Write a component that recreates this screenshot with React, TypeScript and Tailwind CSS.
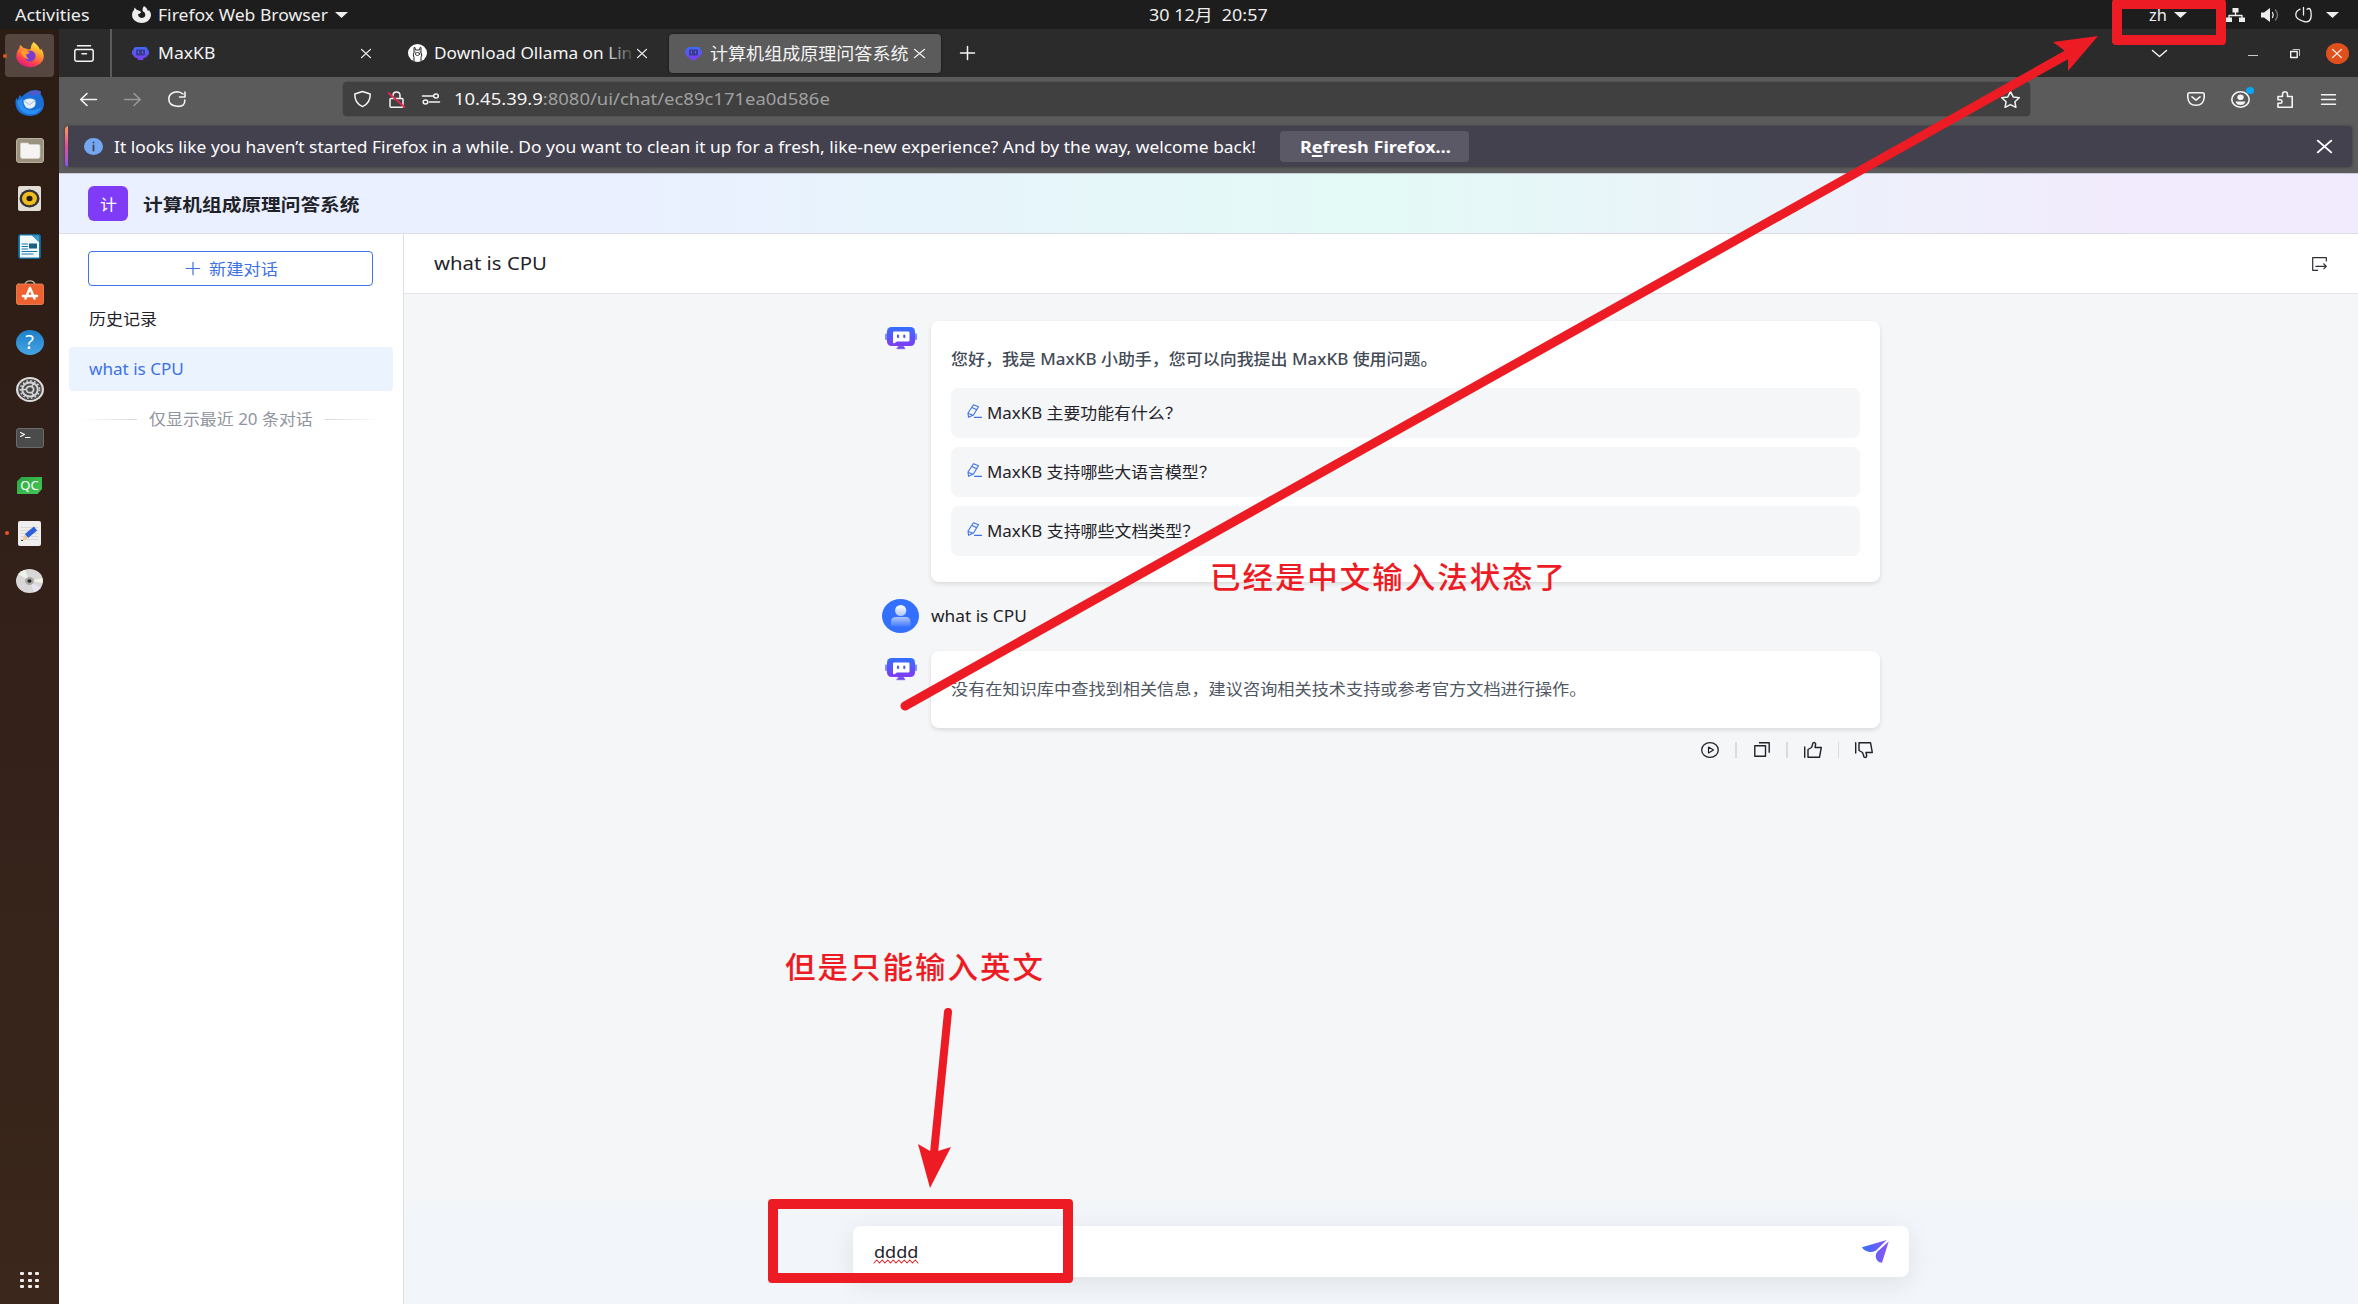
import { useLayoutEffect, useRef, useState, type ReactNode } from "react";

/* Single-line text stretched horizontally to fill the width given by its class. */
function Fit({ className, inner = "", children }: { className: string; inner?: string; children: ReactNode }) {
  const box = useRef<HTMLDivElement>(null);
  const text = useRef<HTMLSpanElement>(null);
  const [scale, setScale] = useState(1);
  useLayoutEffect(() => {
    if (box.current && text.current) setScale(box.current.clientWidth / text.current.offsetWidth);
  }, []);
  return (
    <div ref={box} className={"shrink-0 whitespace-nowrap " + className}>
      <span ref={text} className={"inline-block origin-left " + inner} style={{ transform: `scaleX(${scale})` }}>
        {children}
      </span>
    </div>
  );
}

function Icon({ className, box, children }: { className: string; box: string; children: ReactNode }) {
  return (
    <svg
      viewBox={box}
      preserveAspectRatio="none"
      className={"block shrink-0 overflow-visible " + className}
      fill="none"
      stroke="currentColor"
      strokeWidth="1.5"
      strokeLinecap="round"
      strokeLinejoin="round"
    >
      {children}
    </svg>
  );
}

const Caret = ({ className }: { className: string }) => (
  <Icon className={"h-[6px] w-[13px] " + className} box="0 0 13 6">
    <path d="M0 0H13L6.5 6Z" fill="currentColor" stroke="none" />
  </Icon>
);

const Close = ({ className }: { className: string }) => (
  <Icon className={className} box="0 0 10 10">
    <path d="M.5.5l9 9M9.500.5l-9 9" strokeWidth="1.3" />
  </Icon>
);

const BotFavicon = ({ className }: { className: string }) => (
  <Icon className={"h-[13px] w-[17px] " + className} box="0 0 17 13">
    <defs>
      <linearGradient id="fav" x1="0" y1="0" x2="0" y2="1">
        <stop offset="0" stopColor="#3b6cf6" />
        <stop offset="1" stopColor="#7f3bf5" />
      </linearGradient>
    </defs>
    <path d="M4 0H13Q15.500 0 15.500 2.500L17 4V7L15.500 8.500Q15 10.500 12.500 10.800L11 11.500 11.500 13H5.500L6 11.500 4 10.800Q1.800 10.500 1.500 8.500L0 7V4L1.500 2.500Q1.500 0 4 0Z" fill="url(#fav)" stroke="none" />
    <rect x="4" y="2.500" width="9" height="6" rx="1" fill="#3c3a8e" stroke="none" />
    <path d="M6.500 4.500v1.500M10.500 4.500v1.500" stroke="#5a66ee" strokeWidth="1.200" />
  </Icon>
);

const BotAvatar = () => (
  <Icon className="h-[22px] w-[32px]" box="0 0 32 22">
    <defs>
      <linearGradient id="bot" x1="0" y1="0" x2="0" y2="1">
        <stop offset="0" stopColor="#3370ff" />
        <stop offset="1" stopColor="#7f3bf5" />
      </linearGradient>
    </defs>
    <rect x="0" y="6.500" width="3" height="6.500" rx="1" fill="#7b8df8" stroke="none" />
    <rect x="29" y="6.500" width="3" height="6.500" rx="1" fill="#7b8df8" stroke="none" />
    <rect x="2" y="0" width="28" height="19" rx="4.500" fill="url(#bot)" stroke="none" />
    <path d="M9 4.500H23.500Q24.500 4.500 24.500 5.500V13.500Q24.500 14.500 23.500 14.500H12L9 16.500 8 15.500V5.500Q8 4.500 9 4.500Z" fill="#fff" stroke="none" />
    <path d="M13 8.500v1.600M19.300 8.500v1.600" stroke="#5a5af0" strokeWidth="2.200" />
    <path d="M13.500 19.300h5l1.500 2.500h-8z" fill="#6a4be8" stroke="#6a4be8" strokeWidth=".5" />
  </Icon>
);

const UserAvatar = () => (
  <Icon className="h-[34px] w-[37px]" box="0 0 37 34">
    <defs>
      <linearGradient id="usr" x1="0" y1="0" x2="0" y2="1">
        <stop offset="0" stopColor="#fff" />
        <stop offset="1" stopColor="#fff" stopOpacity=".6" />
      </linearGradient>
      <linearGradient id="usr2" x1="0" y1="0" x2="0" y2="1">
        <stop offset="0" stopColor="#fff" stopOpacity=".6" />
        <stop offset="1" stopColor="#fff" stopOpacity=".05" />
      </linearGradient>
    </defs>
    <ellipse cx="18.500" cy="17" rx="18.500" ry="17" fill="#3370ff" stroke="none" />
    <ellipse cx="18.700" cy="11.500" rx="5.600" ry="5.500" fill="url(#usr)" stroke="none" />
    <path d="M9 27V23Q9 18 14 18H23.500Q28.500 18 28.500 23V27Q23 28 18.700 28T9 27Z" fill="url(#usr2)" stroke="none" />
  </Icon>
);

const EditPen = () => (
  <Icon className="h-[14px] w-[15px] text-[#3d72e8]" box="0 0 15 14">
    <path d="M6.500.7l5 2-5 8.300L1.500 13.300 1 9zM5 3.500l4.800 2.200M1.300 9.500l4.700 1.700M7.500 13.400h7" strokeWidth="1.100" />
  </Icon>
);

function Dock() {
  const cell = "flex h-[47.8px] w-[59px] shrink-0 items-center justify-center";
  return (
    <div className="flex w-[59px] shrink-0 flex-col bg-linear-to-b from-[#2b1c14] via-[#33211a] to-[#3b271b] pt-[2.500px]">
      <div className={cell + " relative"}>
        <span className="absolute left-[3px] top-[22px] h-[4px] w-[4px] rounded-full bg-[#e95420]" />
        <div className="flex h-[43px] w-[49px] items-center justify-center rounded-[4px] bg-[#554740]">
          <Icon className="h-[26px] w-[28px]" box="0 0 28 26">
            <defs>
              <linearGradient id="ffx" x1=".8" y1="0" x2=".3" y2="1">
                <stop offset="0" stopColor="#fff04a" />
                <stop offset=".35" stopColor="#ffa630" />
                <stop offset=".7" stopColor="#ff4a45" />
                <stop offset="1" stopColor="#e31587" />
              </linearGradient>
            </defs>
            <path d="M17.500 0Q23 4 24 8 25 7.500 25 6.500 28 10.500 27.700 15.500A13.800 11.500 0 0 1 .3 14.500Q.5 9 3.200 6.500L4 3Q6 4.200 7.500 6 10 6 12 7.500 13.500 7.500 14.500 7 14.500 3 17.500 0Z" fill="url(#ffx)" stroke="none" />
            <circle cx="14" cy="14" r="5.600" fill="#7b3ad0" stroke="none" />
            <path d="M4.500 9.500Q8 7 11.500 9.500L14 10Q12.500 12 10 12.500 10 15 13 17.500 7 17 4.500 9.500Z" fill="#ff9a2e" stroke="none" />
          </Icon>
        </div>
      </div>
      <div className={cell}>
        <Icon className="h-[26px] w-[29px]" box="0 0 29 26">
          <path d="M13 2Q19-1.500 26 1.500L25.500 4Q29 8 29 14 28 25 15.500 26 2 25.500 .5 14 0 11 1.500 8L3 10Q3 7 5 5L6.500 7Q9 4 13 2Z" fill="#1a6fd6" stroke="none" />
          <path d="M2 11Q3 21 12 24 22 26 27 17 21 21 15 20 7 19 7 9Z" fill="#2a8ff0" stroke="none" />
          <path d="M13 3Q19-1 26 2L25 4.500Q21 3 17 6Z" fill="#5a56c8" stroke="none" />
          <path d="M8.500 10.500Q14 7 20 10 21.500 14 19 17 15 20 11 17.500 8 14 8.500 10.500Z" fill="#e6f0fb" stroke="none" />
          <path d="M9 10.800l5.500 4 5.500-4.300" stroke="#9db9dd" strokeWidth="1" />
        </Icon>
      </div>
      <div className={cell}>
        <Icon className="h-[25px] w-[28px]" box="0 0 28 25">
          <rect x=".5" y=".5" width="27" height="24" rx="2.500" fill="#9a917f" stroke="#b9b1a0" strokeWidth="1" />
          <path d="M5.500 5H12l1.500 1.500H22.500Q24 6.500 24 8V18.500Q24 20.500 22 20.500H6.500Q4.500 20.500 4.500 18.500V6Q4.500 5 5.500 5Z" fill="#f6f4f2" stroke="#d8d4cd" strokeWidth=".7" />
        </Icon>
      </div>
      <div className={cell}>
        <Icon className="h-[25px] w-[23px]" box="0 0 23 25">
          <rect width="23" height="25" rx="2" fill="#e2ddd5" stroke="none" />
          <ellipse cx="11.500" cy="12.500" rx="10" ry="9" fill="#333" stroke="none" />
          <ellipse cx="11.500" cy="12.500" rx="7.500" ry="6.800" fill="#efbb1e" stroke="none" />
          <ellipse cx="11.500" cy="12.500" rx="3" ry="2.700" fill="#221d10" stroke="none" />
        </Icon>
      </div>
      <div className={cell}>
        <Icon className="h-[25px] w-[23px]" box="0 0 23 25">
          <rect x=".5" y=".5" width="22" height="24" rx="2" fill="#1879ad" stroke="#0f6594" strokeWidth="1" />
          <path d="M2 1.500H14L21 8V23.500H2Z" fill="#f3f8fb" stroke="none" />
          <path d="M14 1.500L21 8V1.500Z" fill="#3f9cc9" stroke="none" />
          <rect x="11" y="9.500" width="8" height="5" fill="#1b5f86" stroke="none" />
          <path d="M4 10h5.500M4 12.500h5.500M4 15h5.500M4 17.500h15M4 20h11" stroke="#1879ad" strokeWidth="1.200" />
        </Icon>
      </div>
      <div className={cell}>
        <Icon className="mb-[3px] h-[25px] w-[28px]" box="0 0 28 25">
          <path d="M9 4.500Q10 .8 14 .8T19 4.500" stroke="#c9b9a5" strokeWidth="1.300" />
          <rect x=".5" y="4" width="27" height="20.500" rx="2" fill="#ee6230" stroke="#f28a5e" strokeWidth=".8" />
          <path d="M9.500 18.500L14 8l4.500 10.500M7 16h14" stroke="#fff" strokeWidth="2.500" />
        </Icon>
      </div>
      <div className={cell}>
        <div className="flex h-[25px] w-[28px] items-center justify-center rounded-[50%] bg-linear-to-b from-[#1c7fcb] to-[#45a5e2] text-[20px] leading-none text-white">?</div>
      </div>
      <div className={cell}>
        <Icon className="h-[25px] w-[28px]" box="0 0 28 25">
          <ellipse cx="14" cy="12.500" rx="14" ry="12.500" fill="#dcdbd9" stroke="none" />
          <ellipse cx="14" cy="12.500" rx="11.800" ry="10.500" fill="#4a4a4a" stroke="none" />
          <ellipse cx="14" cy="12.500" rx="7.800" ry="7" stroke="#d5d5d5" strokeWidth="2" />
          <ellipse cx="14" cy="12.500" rx="9.600" ry="8.600" stroke="#d5d5d5" strokeWidth="1.600" strokeDasharray="1.600 2.300" strokeLinecap="butt" />
          <ellipse cx="14" cy="12.500" rx="3.600" ry="3.200" stroke="#d5d5d5" strokeWidth="1.800" />
          <path d="M10 12.500H6M16 9l2-3M16 16l2 3" stroke="#d5d5d5" strokeWidth="1.500" />
        </Icon>
      </div>
      <div className={cell}>
        <Icon className="h-[20px] w-[28px]" box="0 0 28 20">
          <rect x=".5" y=".5" width="27" height="19" rx="2" fill="#4b4b4b" stroke="#6b6b6b" strokeWidth="1" />
          <path d="M4.500 4.500l4 2-4 2M9.500 9.500h4.500" stroke="#fff" strokeWidth="1.100" />
        </Icon>
      </div>
      <div className={cell}>
        <div className="flex h-[17px] w-[25px] items-center justify-center bg-linear-to-br from-[#2ba63f] to-[#45c759] text-[13px] leading-none text-white [clip-path:polygon(18%_0,100%_0,100%_70%,82%_100%,0_100%,0_25%)]">
          QC
        </div>
      </div>
      <div className={cell + " relative"}>
        <span className="absolute left-[5px] top-[22px] h-[4px] w-[4px] rounded-full bg-[#e95420]" />
        <Icon className="h-[25px] w-[23px]" box="0 0 23 25">
          <rect width="23" height="25" rx="2" fill="#efeeed" stroke="none" />
          <path d="M3 6.500h17M3 9.500h17M3 12.500h17M3 15.500h17M3 18.500h17" stroke="#cfcfcf" strokeWidth=".7" />
          <path d="M8.500 15L17.500 7.500" stroke="#2e5fd8" strokeWidth="5" strokeLinecap="butt" />
          <path d="M6.500 13.800l4 3.200-6.500 3z" fill="#f0c8a0" stroke="none" />
          <path d="M3.500 19.500h1" stroke="#333" strokeWidth="1" />
        </Icon>
      </div>
      <div className={cell}>
        <Icon className="h-[24px] w-[27px]" box="0 0 27 24">
          <ellipse cx="13.500" cy="12" rx="13.500" ry="12" fill="#d8d6d6" stroke="none" />
          <path d="M13.500 12L2 5Q5 1.500 9 .8Z" fill="#eef3ea" stroke="none" />
          <path d="M13.500 12L25 19Q22 22.500 18 23.200Z" fill="#e8e4f3" stroke="none" />
          <path d="M13.500 12L26.500 9V14Z" fill="#f5f1e6" stroke="none" />
          <ellipse cx="13.500" cy="12" rx="4.500" ry="4" fill="#a9a6a6" stroke="none" />
          <ellipse cx="13.500" cy="12" rx="2" ry="1.800" fill="#2d2222" stroke="none" />
        </Icon>
      </div>
      <div className="mt-auto flex h-[48px] items-center justify-center">
        <div className="grid grid-cols-3 gap-x-[3.500px] gap-y-[3.500px]">
          {Array.from({ length: 9 }, (_, i) => (
            <span key={i} className="h-[3px] w-[4px] rounded-[1px] bg-[#f0eeec]" />
          ))}
        </div>
      </div>
    </div>
  );
}

function TopBar() {
  return (
    <div className="flex h-[29px] shrink-0 items-center bg-[#1d1d1d] text-[15.500px] leading-[20px] text-[#eeeeee]">
      <Fit className="ml-[15px] w-[75px]">Activities</Fit>
      <Icon className="ml-[42px] h-[17px] w-[19px]" box="0 0 19 17">
        <path d="M12 0Q15.500 2 16 5L17 4Q19 6.500 19 9.500A9.500 7.800 0 0 1 0 9Q0 5.500 2 4L2.500 1.500 5 4Q7 4 8.500 5.500L9 6.500Q7.500 8 6 8.200 6.500 12 10 12 13.500 11.500 13.300 8.500 13.200 6 10.500 5 10 2 12 0Z" fill="currentColor" stroke="none" />
      </Icon>
      <Fit className="ml-[7px] w-[170px]">Firefox Web Browser</Fit>
      <Caret className="ml-[7px]" />
      <Fit className="ml-[801px] mt-[1px] w-[119px]">30 12月&nbsp; 20:57</Fit>
      <Fit className="ml-[881px] w-[18px]">zh</Fit>
      <Caret className="ml-[7px]" />
      <Icon className="ml-[39px] h-[14px] w-[19px]" box="0 0 19 14">
        <path d="M6.500 0h6v4.500h-6zM0 9.500h6V14H0zM13 9.500h6V14h-6z" fill="currentColor" stroke="none" />
        <path d="M9.500 4v3.500M3 10V7.500h13V10" strokeWidth="1.300" />
      </Icon>
      <Icon className="ml-[16px] h-[14px] w-[18px]" box="0 0 18 14">
        <path d="M0 4.500h3L9 0v14L3 9.500H0z" fill="currentColor" stroke="none" />
        <path d="M11.500 4.500q1.500 2.500 0 5" strokeWidth="1.300" />
        <path d="M14.500 2q4 5 0 10" stroke="#777" strokeWidth="1.300" />
      </Icon>
      <Icon className="ml-[16px] h-[14px] w-[17px]" box="0 0 17 14">
        <path d="M5 1.200Q.8 3 .8 7T8.500 13.300 16.200 7 12 1.200M8.500-.5V7" strokeWidth="1.300" />
      </Icon>
      <Caret className="ml-[14px]" />
    </div>
  );
}

function TabStrip() {
  return (
    <div className="flex h-[48px] shrink-0 items-center bg-[#2b2b2b] text-[16px] leading-[20px] text-[#f4f4f4]">
      <Icon className="ml-[14.500px] h-[17px] w-[20px]" box="0 0 20 17">
        <path d="M3.500.7h13M1.500 4.500h17M.8 6.500Q.8 4.500 2.500 4.500h15Q19.200 4.500 19.200 6.500v7.500Q19.200 16.300 17 16.300H3Q.8 16.300 .8 14zM8 8.800h4.500" strokeWidth="1.500" />
      </Icon>
      <div className="ml-[16px] h-full w-[2px] bg-[#5b5b5b]" />
      <BotFavicon className="ml-[20.500px]" />
      <Fit className="ml-[8.500px] w-[57px]">MaxKB</Fit>
      <Close className="ml-[146.500px] h-[9px] w-[10px]" />
      <Icon className="ml-[36.500px] h-[18px] w-[19px]" box="0 0 19 18">
        <ellipse cx="9.500" cy="9" rx="9.500" ry="9" fill="#fff" stroke="none" />
        <path d="M6 17V13.500Q4.500 11 6 8.500V3.500Q7 2 7.500 6H11.500Q12 2 13 3.500V8.500Q14.500 11 13 13.500V17" stroke="#222" strokeWidth="1" />
        <ellipse cx="9.500" cy="10" rx="2.200" ry="1.500" stroke="#222" strokeWidth=".8" />
        <path d="M7 8h.2M12 8h.2" stroke="#222" strokeWidth="1" />
      </Icon>
      <div className="relative ml-[7px] w-[198px]">
        <Fit className="w-[198px]">Download Ollama on Lin</Fit>
        <div className="absolute inset-y-0 right-0 w-[28px] bg-linear-to-r from-transparent to-[#2b2b2bdd]" />
      </div>
      <Close className="ml-[5.500px] h-[9px] w-[10px]" />
      <div className="ml-[22px] flex h-[39px] w-[272px] items-center rounded-[4px] bg-[#5b5b5b] shadow-[0_0_3px_#00000080]">
        <BotFavicon className="ml-[16px]" />
        <Fit className="ml-[8px] w-[199px]" inner="text-[17.500px]">计算机组成原理问答系统</Fit>
        <Close className="ml-[5px] h-[9px] w-[11px]" />
      </div>
      <Icon className="ml-[19px] h-[14px] w-[15px]" box="0 0 15 14">
        <path d="M7.500.5v13M.5 7h14" />
      </Icon>
      <Icon className="ml-[1176.500px] h-[7px] w-[15px]" box="0 0 15 7">
        <path d="M.5.5l7 6 7-6" />
      </Icon>
      <div className="ml-[81.500px] mt-[5px] h-[1.500px] w-[10px] bg-[#c9c9c9]" />
      <Icon className="ml-[32px] h-[9px] w-[10px]" box="0 0 10 9">
        <path d="M.7 2.500h6.500v6H.7z" strokeWidth="1.400" />
        <path d="M3 .5h6.500v6" strokeWidth=".8" />
      </Icon>
      <div className="ml-[25.500px] flex h-[21px] w-[23px] items-center justify-center rounded-[50%] bg-[#e0501c]">
        <Close className="h-[9px] w-[10px]" />
      </div>
    </div>
  );
}

function NavBar() {
  return (
    <div className="flex h-[44px] shrink-0 items-center bg-[#5b5b5b] text-[16.500px] leading-[22px] text-[#f4f4f4]">
      <Icon className="ml-[21px] h-[13px] w-[17px]" box="0 0 17 13">
        <path d="M7 .5L.7 6.500 7 12.500M.7 6.500H16.500" strokeWidth="1.600" />
      </Icon>
      <Icon className="ml-[27px] h-[13px] w-[17px] text-[#999]" box="0 0 17 13">
        <path d="M10 .5l6.300 6-6.300 6M16.300 6.500H.5" strokeWidth="1.600" />
      </Icon>
      <Icon className="ml-[27px] h-[16px] w-[18px]" box="0 0 18 16">
        <path d="M15 3Q12.500.7 9 .7 .8 1.500 .8 8T9 15.300 16.800 9M17 1v5h-5.500" strokeWidth="1.600" />
      </Icon>
      <div className="ml-[157px] flex h-[34px] w-[1687px] items-center rounded-[4px] bg-[#404040] shadow-[0_0_0_.5px_#4a4a4a]">
        <Icon className="ml-[11px] h-[16px] w-[17px]" box="0 0 17 16">
          <path d="M8.500.5L16.200 3Q16.500 12 8.500 15.600 .5 12 .8 3Z" />
        </Icon>
        <Icon className="ml-[17px] h-[17px] w-[17px]" box="0 0 17 17">
          <path d="M2 8.500Q2 7.500 3 7.500h11Q15 7.500 15 8.500v6.500Q15 16.200 14 16.200H3Q2 16.200 2 15zM5 7.500V4.500Q5 1 8.500 1T12 4.500v3" />
          <path d="M.5 2L16.500 16" stroke="#e22850" strokeWidth="1.700" />
        </Icon>
        <Icon className="ml-[17px] h-[10px] w-[18px]" box="0 0 18 10">
          <path d="M.5 2H11M7.500 8H17.500" />
          <ellipse cx="14" cy="2" rx="2.300" ry="2" />
          <ellipse cx="3.500" cy="8" rx="2.300" ry="2" />
        </Icon>
        <Fit className="ml-[14px] w-[376px]">
          10.45.39.9<span className="text-[#a0a0a0]">:8080/ui/chat/ec89c171ea0d586e</span>
        </Fit>
        <Icon className="ml-[1171px] h-[17px] w-[19px]" box="0 0 19 17">
          <path d="M9.500.7l2.700 5.200 6.100.8-4.400 4 1 5.600-5.400-2.700-5.400 2.700 1-5.600-4.400-4 6.100-.8z" />
        </Icon>
      </div>
      <Icon className="ml-[157px] h-[14px] w-[18px]" box="0 0 18 14">
        <path d="M2.500.8h13Q17.200.8 17.200 2.500V5.500Q16.500 13.300 9 13.300T.8 5.500V2.500Q.8.8 2.500.8ZM5 4.800l4 3.400 4-3.400" strokeWidth="1.600" />
      </Icon>
      <div className="relative ml-[26px]">
        <Icon className="h-[17px] w-[19px]" box="0 0 19 17">
          <ellipse cx="9.500" cy="8.500" rx="8.700" ry="7.700" strokeWidth="1.600" />
          <ellipse cx="9.500" cy="6.300" rx="3.200" ry="2.800" fill="currentColor" stroke="none" />
          <path d="M4.500 10.500h10q-1 3.500-5 3.500t-5-3.500z" fill="currentColor" stroke="none" />
        </Icon>
        <span className="absolute -top-[4px] left-[15px] h-[7px] w-[8px] rounded-full bg-[#0ba5f0]" />
      </div>
      <Icon className="ml-[27px] h-[17px] w-[16px]" box="0 0 16 17">
        <path d="M1 5.500h4.500V3.500Q5.500.8 8 .8t2.500 2.700v2H15.200v10.700H1v-4H3.500Q5 12.200 5 10.500T3.500 8.800H1z" strokeWidth="1.600" />
      </Icon>
      <Icon className="ml-[28px] h-[11px] w-[15px]" box="0 0 15 11">
        <path d="M.5.7h14M.5 5.500h14M.5 10.300h14" strokeWidth="1.400" />
      </Icon>
    </div>
  );
}

function Notice() {
  return (
    <div className="flex h-[52px] shrink-0 bg-[#5b5b5b] pb-[6px] pl-[6px] pr-[6px] pt-[5px]">
      <div className="flex h-[41px] w-full items-center overflow-hidden rounded-[4px] bg-[#43414d] text-[16px] leading-[20px] text-[#fbfbfe] shadow-[0_0_3px_#00000060]">
        <div className="h-full w-[3px] bg-linear-to-b from-[#ff9a4a] via-[#e5489f] to-[#8a4df0]" />
        <Icon className="ml-[16px] h-[17px] w-[19px]" box="0 0 19 17">
          <ellipse cx="9.500" cy="8.500" rx="9.500" ry="8.500" fill="#73a7f3" stroke="none" />
          <path d="M9.500 7.500v5M9.500 4.500v.1" stroke="#43414d" strokeWidth="1.800" />
        </Icon>
        <Fit className="ml-[11px] w-[1142px]">
          It looks like you haven’t started Firefox in a while. Do you want to clean it up for a fresh, like-new experience? And by the way, welcome back!
        </Fit>
        <div className="ml-[24px] flex h-[31px] w-[189px] items-center rounded-[4px] bg-[#5b5966] pl-[20px] font-bold">
          <Fit className="w-[151px]">
            R<span className="underline decoration-2 underline-offset-2">e</span>fresh Firefox…
          </Fit>
        </div>
        <Close className="ml-[848px] h-[13px] w-[15px]" />
      </div>
    </div>
  );
}

function Sidebar() {
  return (
    <div className="flex w-[345px] shrink-0 flex-col border-r-[1.500px] border-[#dee0e3] bg-white text-[15.500px] leading-[20px]">
      <div className="ml-[29px] mt-[17px] flex h-[35px] w-[285px] items-center rounded-[4px] border border-[#3d72e8] text-[#3d72e8]">
        <Icon className="ml-[96.500px] h-[13px] w-[14px]" box="0 0 14 13">
          <path d="M7 .3v12.400M.3 6.500h13.400" strokeWidth="1.200" />
        </Icon>
        <Fit className="ml-[9px] w-[69px]">新建对话</Fit>
      </div>
      <Fit className="ml-[29.500px] mt-[23px] w-[68px] text-[#1f2329]">历史记录</Fit>
      <div className="ml-[10px] mt-[18px] flex h-[44px] w-[324px] items-center rounded-[4px] bg-[#ebf3ff] pl-[20px] text-[16px] text-[#3d72e8]">
        <Fit className="w-[95px]">what is CPU</Fit>
      </div>
      <div className="mt-[18px] flex items-center text-[#8f959e]">
        <div className="ml-[22px] h-px w-[56px] bg-linear-to-r from-transparent to-[#d5d8dc]" />
        <Fit className="ml-[12px] w-[164px]">仅显示最近 20 条对话</Fit>
        <div className="ml-[12px] h-px w-[56px] bg-linear-to-l from-transparent to-[#d5d8dc]" />
      </div>
    </div>
  );
}

const cardShadow = "rounded-[8px] bg-white shadow-[0_2px_4px_#1f232920]";

function Question({ width, children }: { width: string; children: ReactNode }) {
  return (
    <div className="flex h-[50px] items-center rounded-[8px] bg-[#f5f6f7] pl-[16px] text-[#1f2329]">
      <div className="mb-[4px]">
        <EditPen />
      </div>
      <Fit className={"ml-[5px] " + width}>{children}</Fit>
    </div>
  );
}

function Chat() {
  const sep = "h-[16px] w-[1.500px] bg-[#d9dbdf]";
  return (
    <div className="flex flex-1 flex-col bg-[#f5f6f7] text-[15.500px] leading-[20px]">
      <div className="flex h-[60px] shrink-0 items-center justify-between border-b-[1.500px] border-[#e3e5e8] bg-white pl-[29.500px] pr-[31px]">
        <Fit className="-mt-[1px] w-[113px] text-[18px] text-[#1f2329]">what is CPU</Fit>
        <Icon className="h-[14px] w-[15px] text-[#2b2f36]" box="0 0 15 14">
          <path d="M14.300 4.500V.6H.7V13.300H6M3.500 9.300h10.500M11.500 6.500l2.800 2.800-2.800 2.800" strokeWidth="1.200" strokeLinecap="butt" />
        </Icon>
      </div>

      <div className="ml-[478px] mt-[27px] flex w-[998px] flex-col">
        <div className="flex items-start">
          <div className="w-[49px] pl-[3px] pt-[6px]">
            <BotAvatar />
          </div>
          <div className={"flex h-[261px] w-[949px] flex-col gap-[9px] px-[20px] pt-[28px] " + cardShadow}>
            <Fit className="mb-[10px] w-[487px] font-medium text-[#434b57]">您好，我是 MaxKB 小助手，您可以向我提出 MaxKB 使用问题。</Fit>
            <Question width="w-[195px]">MaxKB 主要功能有什么？</Question>
            <Question width="w-[229px]">MaxKB 支持哪些大语言模型？</Question>
            <Question width="w-[212px]">MaxKB 支持哪些文档类型？</Question>
          </div>
        </div>
        <div className="mt-[17px] flex items-center">
          <UserAvatar />
          <Fit className="ml-[12px] w-[96px] text-[16px] text-[#1f2329]">what is CPU</Fit>
        </div>
        <div className="mt-[18px] flex items-start">
          <div className="w-[49px] pl-[3px] pt-[7px]">
            <BotAvatar />
          </div>
          <div className={"h-[77px] w-[949px] px-[20px] pt-[28px] " + cardShadow}>
            <Fit className="w-[636px] text-[#4f5763]">没有在知识库中查找到相关信息，建议咨询相关技术支持或参考官方文档进行操作。</Fit>
          </div>
        </div>
        <div className="mt-[13.500px] flex items-center text-[#1f2329]">
          <Icon className="ml-[819px] h-[16px] w-[18px]" box="0 0 18 16">
            <ellipse cx="9" cy="8" rx="8.300" ry="7.300" strokeWidth="1.300" />
            <path d="M7.500 5l5 3-5 3z" strokeWidth="1.200" />
          </Icon>
          <div className={"ml-[16px] " + sep} />
          <Icon className="ml-[17px] h-[15px] w-[16px]" box="0 0 16 15">
            <path d="M.8 3.700h10.700v10.500H.8zM5 .7h10.200v10" strokeWidth="1.400" strokeLinecap="butt" />
          </Icon>
          <div className={"ml-[16.500px] " + sep} />
          <Icon className="ml-[16px] h-[16px] w-[18px]" box="0 0 18 16">
            <path d="M.7 5v10.300M4 7.500L7.500 5.500Q8.500 3 9 1 11-.3 11.700 2L11 5.500H17.300L15.500 15.300H4z" strokeWidth="1.400" />
          </Icon>
          <div className={"ml-[16px] " + sep} />
          <Icon className="ml-[16px] h-[16px] w-[18px]" box="0 0 18 16">
            <path d="M.7 11V.7M4 8.500L7.500 10.500Q8.500 13 9 15 11 16.300 11.700 14L11 10.500H17.300L15.500.7H4z" strokeWidth="1.400" />
          </Icon>
        </div>
      </div>

      <div className="mt-auto h-[112px] bg-linear-to-b from-[#f5f6f7] to-[#f2f6fa] to-20% pl-[449px] pt-[34px]">
        <div className="flex h-[51px] w-[1056px] items-center rounded-[8px] bg-white pl-[21px] text-[#1f2329] shadow-[0_6px_24px_#1f232918]">
          <div className="relative">
            <Fit className="w-[44px] text-[16px]">dddd</Fit>
            <Icon className="absolute -bottom-[1px] left-0 h-[3px] w-[44px] text-[#e22]" box="0 0 44 3">
              <path d="M0 3L2.750 0 5.500 3 8.250 0 11 3 13.750 0 16.500 3 19.250 0 22 3 24.750 0 27.500 3 30.250 0 33 3 35.750 0 38.500 3 41.250 0 44 3" strokeWidth="1.100" />
            </Icon>
          </div>
          <Icon className="ml-[944px] h-[23px] w-[27px]" box="0 0 27 23">
            <defs>
              <linearGradient id="send" x1="0" y1="0" x2="27" y2="0" gradientUnits="userSpaceOnUse">
                <stop offset="0" stopColor="#3370ff" />
                <stop offset="1" stopColor="#9451f5" />
              </linearGradient>
            </defs>
            <path d="M0 7.300L24.800 0 14 10.500Q11 12.300 7.500 12 2 11 0 7.300ZM26.700 1.500L20 22.800Q14.500 22 13.700 17 13.500 13.500 15.500 11.500Z" fill="url(#send)" stroke="none" />
          </Icon>
        </div>
      </div>
    </div>
  );
}

/* Red markup drawn over the desktop. */
function Annotations() {
  return (
    <div className="pointer-events-none absolute inset-0 text-[30px] font-medium leading-[34px] text-[#ed1c24]">
      <svg className="absolute inset-0 h-[1304px] w-[2358px]" fill="#ed1c24" stroke="#ed1c24">
        <path d="M905 706L2068 54" strokeWidth="9" strokeLinecap="round" />
        <path d="M2098 36L2053 42 2065 51 2068 58V71Z" stroke="none" />
        <path d="M948 1012L934 1153" strokeWidth="8" strokeLinecap="round" />
        <path d="M930 1188L918 1144 930 1151H938L951 1147Z" stroke="none" />
      </svg>
      <div className="absolute left-[2112px] top-[-1px] h-[46px] w-[114px] rounded-[4px] border-[10px] border-[#ed1c24]" />
      <div className="absolute left-[768px] top-[1199px] h-[84px] w-[305px] rounded-[4px] border-[10px] border-[#ed1c24]" />
      <Fit className="absolute left-[1210px] top-[560px] w-[357px]" inner="tracking-[2px]">已经是中文输入法状态了</Fit>
      <Fit className="absolute left-[784.500px] top-[950px] w-[260px]" inner="tracking-[2px]">但是只能输入英文</Fit>
    </div>
  );
}

export default function App() {
  return (
    <div className="relative flex h-[1304px] w-[2358px] flex-col overflow-hidden font-['Noto_Sans','Noto_Sans_CJK_SC',sans-serif]">
      <TopBar />
      <div className="flex flex-1">
        <Dock />
        <div className="flex flex-1 flex-col">
          <TabStrip />
          <NavBar />
          <Notice />
          <div className="flex h-[61px] shrink-0 items-center border-b-[1.500px] border-t border-b-[#dcdee3] border-t-[#c9ccd6] bg-linear-to-r from-[#eaf0ff] from-25% via-[#e3faf6] via-57% to-[#f2ebfd] to-90% pl-[29px]">
            <div className="flex h-[35px] w-[40px] items-center justify-center rounded-[6px] bg-[#7f3bf5] text-white">
              <Fit className="w-[17px]" inner="text-[15px]">计</Fit>
            </div>
            <Fit className="ml-[15px] w-[217px] text-[17.500px] font-bold leading-[22px] text-[#1f2329]">计算机组成原理问答系统</Fit>
          </div>
          <div className="flex flex-1">
            <Sidebar />
            <Chat />
          </div>
        </div>
      </div>
      <Annotations />
    </div>
  );
}
